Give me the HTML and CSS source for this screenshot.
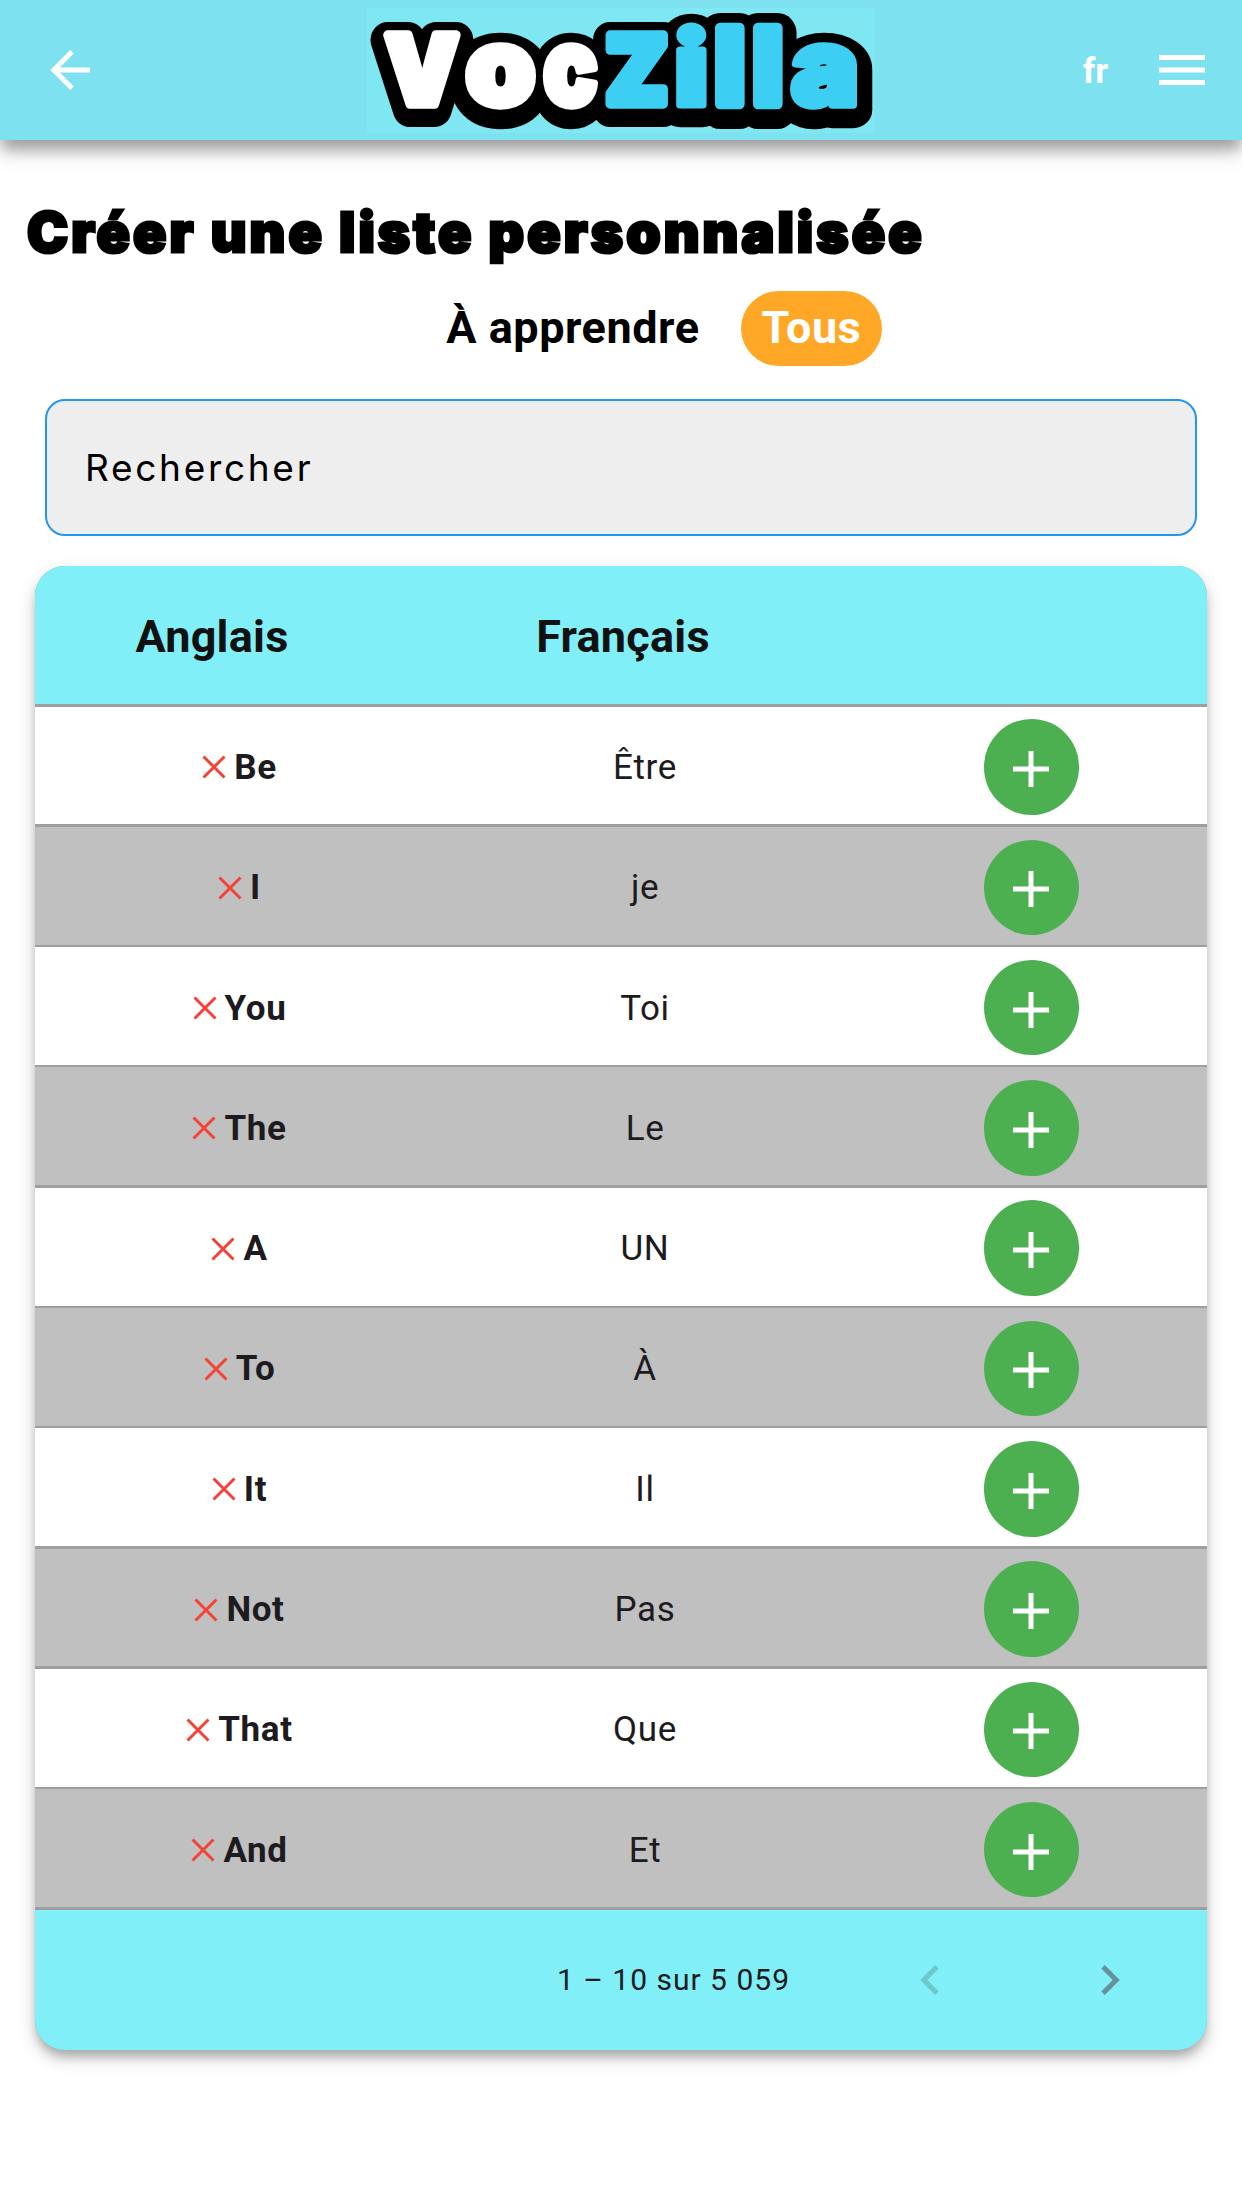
FILE: index.html
```html
<!DOCTYPE html>
<html lang="fr">
<head>
<meta charset="utf-8">
<title>VocZilla</title>
<link rel="stylesheet" href="styles.css">
</head>
<body>
<svg class="defs" aria-hidden="true">
  <symbol id="cross" viewBox="0 0 30 30"><path d="M4.5 4.5 25.5 25.5M25.5 4.5 4.5 25.5"/></symbol>
  <symbol id="plus" viewBox="0 0 36 36"><path d="M18 0V36M0 18H36"/></symbol>
</svg>
<header class="bar">
  <svg class="back" viewBox="0 0 40 40"><path d="M22 1.8 3.8 20 22 38.2M4 20H40"/></svg>
  <svg class="logo" viewBox="367 8 508 125">
    <defs>
      <g id="voc">
        <text transform="translate(385.7 103.5) scale(.91 .95)">V</text>
        <text class="round" transform="translate(465.6 105) scale(1.12 1.07)">o</text>
        <text class="round" transform="translate(543.3 105) scale(.9 1.07)">c</text>
      </g>
      <g id="zilla">
        <text transform="translate(605.4 103.5) scale(.9 .95)">Z</text>
        <text class="round" transform="translate(674.4 104.5) scale(1.14 1.01)">i</text>
        <text transform="translate(715 103.5) scale(1 1.048)">l</text>
        <text transform="translate(753 103.5) scale(1 1.048)">l</text>
        <text class="round" transform="translate(791.2 105) scale(1.13 1.07)">a</text>
      </g>
    </defs>
    <g class="logo-back" transform="translate(0 5)"><use href="#voc"/><use href="#zilla"/></g>
    <g class="logo-core"><use href="#voc"/><use href="#zilla"/></g>
    <use class="logo-voc" href="#voc"/>
    <use class="logo-zilla" href="#zilla"/>
  </svg>
  <div class="tools">
    <span class="lang">fr</span>
    <svg class="menu" viewBox="0 0 46 30"><path d="M0 2.5H46M0 15H46M0 27.5H46"/></svg>
  </div>
</header>
<main>
  <h1>Créer une liste personnalisée</h1>
  <nav class="tabs"><span class="tab">À apprendre</span><span class="tab active">Tous</span></nav>
  <div class="search">Rechercher</div>
  <section class="table">
    <div class="head"><span>Anglais</span><span>Français</span></div>
    <div class="row"><b><svg><use href="#cross"/></svg>Be</b><span>Être</span><i><svg><use href="#plus"/></svg></i></div>
    <div class="row"><b><svg><use href="#cross"/></svg>I</b><span>je</span><i><svg><use href="#plus"/></svg></i></div>
    <div class="row"><b><svg><use href="#cross"/></svg>You</b><span>Toi</span><i><svg><use href="#plus"/></svg></i></div>
    <div class="row"><b><svg><use href="#cross"/></svg>The</b><span>Le</span><i><svg><use href="#plus"/></svg></i></div>
    <div class="row"><b><svg><use href="#cross"/></svg>A</b><span>UN</span><i><svg><use href="#plus"/></svg></i></div>
    <div class="row"><b><svg><use href="#cross"/></svg>To</b><span>À</span><i><svg><use href="#plus"/></svg></i></div>
    <div class="row"><b><svg><use href="#cross"/></svg>It</b><span>Il</span><i><svg><use href="#plus"/></svg></i></div>
    <div class="row"><b><svg><use href="#cross"/></svg>Not</b><span>Pas</span><i><svg><use href="#plus"/></svg></i></div>
    <div class="row"><b><svg><use href="#cross"/></svg>That</b><span>Que</span><i><svg><use href="#plus"/></svg></i></div>
    <div class="row"><b><svg><use href="#cross"/></svg>And</b><span>Et</span><i><svg><use href="#plus"/></svg></i></div>
    <div class="foot">
      <span>1 – 10 sur 5 059</span>
      <svg class="prev" viewBox="0 0 19 30"><path d="M17 1.8 3.8 15 17 28.2"/></svg>
      <svg class="next" viewBox="0 0 19 30"><path d="M2 1.8 15.2 15 2 28.2"/></svg>
    </div>
  </section>
</main>
</body>
</html>
```
FILE: styles.css
```css
* { box-sizing: border-box; }
body {
  margin: 0;
  min-height: 2208px;
  background: #fff;
  color: #000;
  font-family: Roboto, "Liberation Sans", sans-serif;
}
svg { display: block; fill: none; stroke: currentColor; stroke-width: 5; flex: none; }
.defs { display: none; }

.bar {
  height: 140px;
  padding: 0 37px 0 50px;
  display: grid;
  grid-template-columns: 317px 508px 1fr;
  align-items: center;
  background: #7de1f0;
  color: #fff;
  box-shadow: 0 11px 12px -2px rgba(0, 0, 0, .22), 0 11px 20px 0 rgba(0, 0, 0, .22);
}
.back { width: 40px; height: 40px; }
.logo {
  --round: 7px;
  width: 508px;
  height: 125px;
  background: #7fe7f2;
  font: 900 100px Inter, sans-serif;
  stroke-width: 10;
  stroke-linejoin: round;
}
.round { stroke-width: var(--round); }
.logo-back { --round: 34px; fill: #000; stroke: #000; stroke-width: 38; }
.logo-core { --round: 16px; fill: #000; stroke: #000; stroke-width: 16; }
.logo-voc { fill: #fff; stroke: #fff; }
.logo-zilla { fill: #3dcff3; stroke: #3dcff3; }
.tools { display: flex; justify-content: flex-end; align-items: center; gap: 51px; }
.lang { padding-top: 2px; font-size: 35px; font-weight: 700; }
.menu { width: 46px; height: 30px; }

h1 {
  margin: 0;
  padding: 59px 0 0 27px;
  font: 900 55px/67px Inter, sans-serif;
  letter-spacing: 3.15px;
  -webkit-text-stroke: 3px #000;
}
.tabs {
  margin-top: 25px;
  padding-right: 360px;
  display: flex;
  justify-content: flex-end;
  gap: 20px;
  font-size: 45px;
  font-weight: 700;
  letter-spacing: .55px;
}
.tab { height: 75px; padding: 0 21px; line-height: 74px; border-radius: 38px; }
.active { padding: 0 21px; letter-spacing: .4px; background: #ffa827; color: #fff; }
.search {
  height: 137px;
  margin: 33px 45px 0;
  padding: 0 0 1px 38px;
  display: flex;
  align-items: center;
  border: 2.5px solid #2196f3;
  border-radius: 20px;
  background: #eee;
  font: 400 37px Inter, sans-serif;
  letter-spacing: 2.7px;
}

.table {
  margin: 30.4px 35px 0;
  border-radius: 30px;
  overflow: hidden;
  background: #9e9e9e;
  color: #1d1b20;
  display: grid;
  grid-template-rows: 137.7px repeat(10, 117.8px) 140px;
  gap: 2.5px;
  box-shadow: 0 8px 10px -2px rgba(0, 0, 0, .2), 0 8px 18px 0 rgba(0, 0, 0, .2);
}
.head, .foot { background: #80eff7; }
.head {
  padding-top: 3px;
  display: grid;
  grid-template-columns: 354px 468px;
  align-items: center;
  text-align: center;
  font-size: 45px;
  font-weight: 700;
  letter-spacing: .25px;
  color: #111;
}
.row {
  padding-top: 3px;
  display: grid;
  grid-template-columns: 406px 408px 364.5px;
  align-items: center;
  justify-items: center;
  background: #fff;
  font-size: 35px;
  letter-spacing: .625px;
}
.row:nth-child(odd) { background: #c0c0c0; }
.row b { padding-top: 1px; display: flex; align-items: center; gap: 5px; }
.row span { padding-top: 1px; }
.row b svg { width: 30px; height: 30px; color: #f44336; stroke-width: 3; }
.row i {
  width: 95.5px;
  height: 95.5px;
  padding-top: 4px;
  display: grid;
  place-items: center;
  border-radius: 50%;
  background: #4caf50;
  color: #fff;
}
.row i svg { width: 36px; height: 36px; }
.foot {
  padding: 0 93.5px 0 0;
  display: flex;
  justify-content: flex-end;
  align-items: center;
  font-size: 30px;
  letter-spacing: 1px;
}
.prev { margin-left: 130px; color: #6fc6cc; }
.next { margin-left: 162px; color: #66939a; }
.prev, .next { width: 19px; height: 30px; }
```
